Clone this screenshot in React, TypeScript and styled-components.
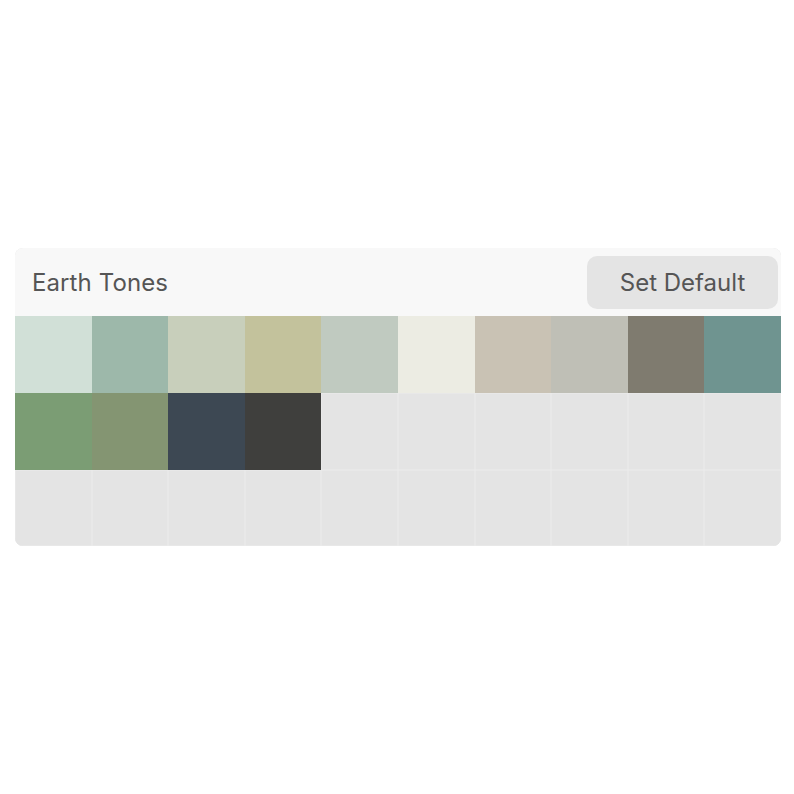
import * as React from "react";
import styled, { createGlobalStyle } from "styled-components";

const GlobalStyle = createGlobalStyle`
  html, body {
    margin: 0;
    padding: 0;
    background: #ffffff;
    font-family: "Inter", "Noto Sans", sans-serif;
  }
`;

const Page = styled.main`
  width: 794px;
  height: 794px;
  box-sizing: border-box;
  padding: 248px 13px 0 15px;
`;

const Card = styled.section`
  border-radius: 8px;
  overflow: hidden;
  background: #e4e4e4;
`;

const Header = styled.header`
  height: 68px;
  background: #f8f8f8;
  display: flex;
  align-items: center;
  justify-content: space-between;
  padding: 0 3px 0 17px;
`;

const Title = styled.h2`
  margin: 0;
  font-size: 24px;
  font-weight: 400;
  color: #555555;
  letter-spacing: 0.1px;
`;

const DefaultButton = styled.button`
  height: 53px;
  width: 191px;
  border: none;
  border-radius: 10px;
  background: #e4e4e4;
  color: #555555;
  font-family: inherit;
  font-size: 24px;
  font-weight: 400;
  margin-top: 1px;
`;

const Grid = styled.div`
  display: grid;
  grid-template-columns: repeat(10, 1fr);
  grid-template-rows: 77px 77px 76px;
`;

const Swatch = styled.div<{ $color?: string }>`
  background: ${(p) => p.$color ?? "#e4e4e4"};
  box-shadow: ${(p) => (p.$color ? "none" : "inset 0 0 0 0.5px #ececec")};
`;

const colors = [
  "#d1e0d7",
  "#9db8aa",
  "#c8cfbb",
  "#c3c29c",
  "#c0cac0",
  "#ecece3",
  "#c9c2b4",
  "#bfbfb6",
  "#7f7b6f",
  "#6f9490",
  "#7b9d74",
  "#849572",
  "#3d4853",
  "#3f3f3d",
];

const App: React.FC = () => {
  const cells = Array.from({ length: 30 }, (_, i) => colors[i]);
  return (
    <>
      <GlobalStyle />
      <Page>
        <Card>
          <Header>
            <Title>Earth Tones</Title>
            <DefaultButton type="button">Set Default</DefaultButton>
          </Header>
          <Grid>
            {cells.map((c, i) => (
              <Swatch key={i} $color={c} />
            ))}
          </Grid>
        </Card>
      </Page>
    </>
  );
};

export default App;
